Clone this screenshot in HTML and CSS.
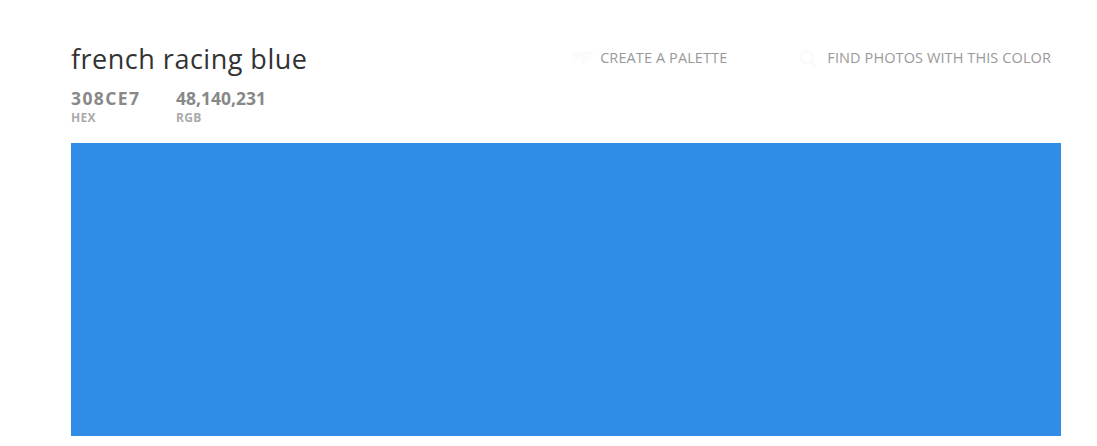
FILE: index.html
```html
<!DOCTYPE html>
<html>
<head>
<meta charset="utf-8">
<link rel="stylesheet" href="styles.css">
</head>
<body>
<div class="page">
  <div class="header">
    <div class="info">
      <h1 class="title">french racing blue</h1>
      <div class="codes">
        <div class="code hex">
          <div class="value">308CE7</div>
          <div class="label">HEX</div>
        </div>
        <div class="code">
          <div class="value">48,140,231</div>
          <div class="label">RGB</div>
        </div>
      </div>
    </div>
    <div class="actions">
      <a class="action palette">
        <svg class="icon" width="26" height="20" viewBox="0 0 26 20"><path d="M3 6h7l-4 5h4M13 4v12M13 5h6v6h-6M22 3v3" fill="none" stroke="#fbfbfb" stroke-width="3"/></svg>
        <span>CREATE A PALETTE</span>
      </a>
      <a class="action photos">
        <svg class="icon" width="26" height="20" viewBox="0 0 26 20"><circle cx="10" cy="9" r="6" fill="none" stroke="#fbfbfb" stroke-width="3"/><path d="M14 13l5 5" stroke="#fbfbfb" stroke-width="3"/></svg>
        <span>FIND PHOTOS WITH THIS COLOR</span>
      </a>
    </div>
  </div>
  <div class="swatch"></div>
</div>
</body>
</html>
```
FILE: styles.css
```css
html, body { margin: 0; padding: 0; background: #fff; }
body { font-family: "Open Sans", "Liberation Sans", sans-serif; }
.page { padding: 42px 36px 0 71px; }
.header { display: flex; justify-content: space-between; align-items: flex-start; height: 101px; }
.title { margin: 0; font-weight: 400; font-size: 27px; line-height: 34px; color: #333; letter-spacing: 0.5px; }
.codes { display: flex; margin-top: 11px; }
.code { display: flex; flex-direction: column; }
.code.hex { width: 105px; }
.value { font-size: 17.5px; font-weight: 700; color: #888; line-height: 22px; letter-spacing: 0; }
.hex .value { letter-spacing: 1.4px; }
.label { font-size: 12px; font-weight: 700; color: #aaa; line-height: 14px; margin-top: 2px; letter-spacing: 0.3px; }
.actions { display: flex; padding-top: 6px; }
.action { display: flex; align-items: center; gap: 4px; font-size: 14.5px; color: #999; line-height: 20px; letter-spacing: 0.1px; }
.action.palette { margin-right: 70px; }
.action.photos { margin-right: 10px; }
.icon { flex: none; }
.swatch { width: 990px; height: 293px; background: #308CE7; }
```
